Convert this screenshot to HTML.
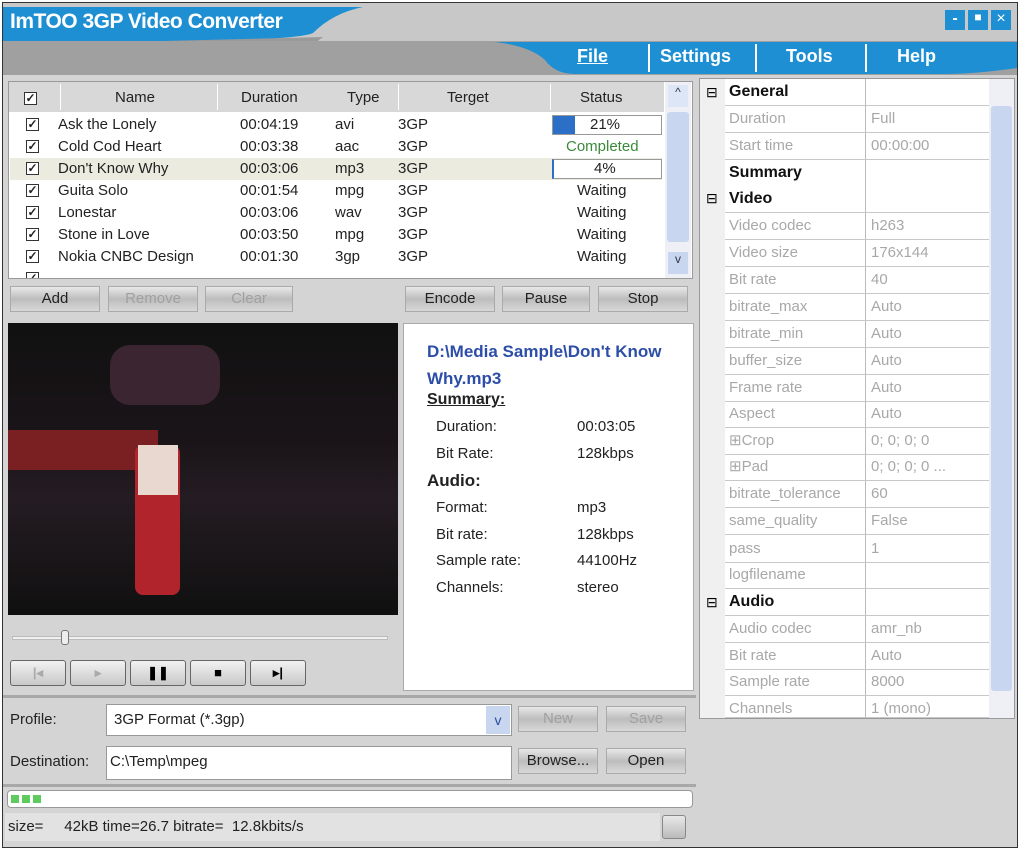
<!DOCTYPE html><html><head><style>
*{margin:0;padding:0;box-sizing:border-box}
body{width:1020px;height:850px;background:#fff;font-family:"Liberation Sans",sans-serif;position:relative;overflow:hidden}
.a{position:absolute}
.win{left:2px;top:2px;width:1016px;height:846px;background:#d4d4d4;border:1px solid #333}
.t{font-size:15px;color:#222;white-space:nowrap}
.btn{position:absolute;height:26px;background:linear-gradient(#e8e8e8,#bdbdbd 50%,#d8d8d8);border:1px solid #aaa;font-size:15px;text-align:center;line-height:24px;color:#222}
.dis{color:#a0a0a0}
.row{position:absolute;left:10px;width:652px;height:22px;font-size:15px;line-height:22px;color:#222}
.row span{position:absolute}
.cb{position:absolute;left:16px;top:4px;width:13px;height:13px;border:1px solid #333;font-size:12px;line-height:11px;text-align:center;font-weight:bold;background:#fff}
.pr{position:absolute;left:725px;width:264px;height:27px;border-bottom:1px solid #c8c8c8;font-size:15px;line-height:26px;color:#a8a8a8}
.pr span{position:absolute;left:4px}.pr i{position:absolute;left:146px;font-style:normal}
.hd{color:#111;font-weight:bold;font-size:16px}
.tb{position:absolute;top:660px;width:56px;height:26px;border:1px solid #666;border-radius:3px;background:linear-gradient(#f2f2f2,#c8c8c8);font-size:13px;text-align:center;line-height:24px;font-weight:bold}
</style></head><body>
<div class="a win"></div>
<!-- title -->
<div class="a" style="left:3px;top:3px;width:1014px;height:38px;background:#c8c8c8"></div>
<svg class="a" style="left:3px;top:3px" width="600" height="80"><path d="M0 4 H360 Q330 10 310 30 Q290 40 0 42Z" fill="#1e8fd2"/><path d="M0 42 L320 34 Q300 50 270 60 L0 62Z" fill="#9a9a9a"/></svg>
<div class="a" style="left:10px;top:10px;font-size:21px;font-weight:bold;color:#fff;letter-spacing:-0.5px">ImTOO 3GP Video Converter</div>
<div class="a" style="left:945px;top:10px;width:70px;height:22px;display:flex;gap:3px"><div style="width:20px;height:20px;background:#1e8fd2;color:#fff;text-align:center;font-weight:bold">-</div><div style="width:20px;height:20px;background:#1e8fd2;color:#fff;text-align:center;font-size:12px">■</div><div style="width:20px;height:20px;background:#1e8fd2;color:#fff;text-align:center">×</div></div>
<div class="a" style="left:3px;top:41px;width:1014px;height:34px;background:#a0a0a0"></div>
<svg class="a" style="left:495px;top:40px" width="522" height="36"><path d="M0 2 H522 V28 Q480 34 450 34 H80 Q60 34 50 20 Q35 6 0 2Z" fill="#1e8fd2"/></svg>
<div class="a" style="left:577px;top:46px;font-size:18px;font-weight:bold;color:#fff;text-decoration:underline">File</div>
<div class="a" style="left:660px;top:46px;font-size:18px;font-weight:bold;color:#fff">Settings</div>
<div class="a" style="left:786px;top:46px;font-size:18px;font-weight:bold;color:#fff">Tools</div>
<div class="a" style="left:897px;top:46px;font-size:18px;font-weight:bold;color:#fff">Help</div>
<div class="a" style="left:648px;top:44px;width:2px;height:28px;background:#fff"></div>
<div class="a" style="left:755px;top:44px;width:2px;height:28px;background:#fff"></div>
<div class="a" style="left:865px;top:44px;width:2px;height:28px;background:#fff"></div>
<!-- list -->
<div class="a" style="left:8px;top:81px;width:685px;height:198px;background:#fff;border:1px solid #999"></div>
<div class="a" style="left:9px;top:82px;width:655px;height:30px;background:#d8d8d8"></div>
<div class="a t" style="left:24px;top:89px"><div class="cb" style="position:relative;left:0;top:0;display:inline-block">✓</div></div>
<div class="a t" style="left:115px;top:89px">Name</div><div class="a t" style="left:241px;top:89px">Duration</div><div class="a t" style="left:347px;top:89px">Type</div><div class="a t" style="left:447px;top:89px">Terget</div><div class="a t" style="left:580px;top:89px">Status</div>
<div class="a" style="left:60px;top:84px;width:1px;height:26px;background:#fff"></div><div class="a" style="left:217px;top:84px;width:1px;height:26px;background:#fff"></div><div class="a" style="left:398px;top:84px;width:1px;height:26px;background:#fff"></div><div class="a" style="left:550px;top:84px;width:1px;height:26px;background:#fff"></div>
<div class="a" style="left:665px;top:82px;width:26px;height:196px;background:#eef0f6"></div>
<div class="a" style="left:667px;top:112px;width:22px;height:130px;background:#c8d6f0;border-radius:3px"></div>
<div class="a" style="left:668px;top:85px;width:20px;height:22px;background:#dde6f6;color:#334;text-align:center;font-size:12px">^</div>
<div class="a" style="left:668px;top:252px;width:20px;height:22px;background:#c8d6f0;color:#334;text-align:center;font-size:12px">v</div>
<div class="row" style="top:114px"><div class="cb">✓</div><span style="left:48px">Ask the Lonely</span><span style="left:230px">00:04:19</span><span style="left:325px">avi</span><span style="left:388px">3GP</span></div>
<div class="a" style="left:552px;top:115px;width:110px;height:20px;border:1px solid #999"><div style="width:22px;height:18px;background:#2b6fc7"></div></div><div class="a t" style="left:590px;top:116px">21%</div>
<div class="row" style="top:136px"><div class="cb">✓</div><span style="left:48px">Cold Cod Heart</span><span style="left:230px">00:03:38</span><span style="left:325px">aac</span><span style="left:388px">3GP</span><span style="left:556px;color:#3a8a3a">Completed</span></div>
<div class="row" style="top:158px;background:#ecebe0"><div class="cb">✓</div><span style="left:48px">Don't Know Why</span><span style="left:230px">00:03:06</span><span style="left:325px">mp3</span><span style="left:388px">3GP</span></div>
<div class="a" style="left:552px;top:159px;width:110px;height:20px;border:1px solid #999;border-left:2px solid #2b6fc7;background:#fff"></div><div class="a t" style="left:594px;top:160px">4%</div>
<div class="row" style="top:180px"><div class="cb">✓</div><span style="left:48px">Guita Solo</span><span style="left:230px">00:01:54</span><span style="left:325px">mpg</span><span style="left:388px">3GP</span><span style="left:567px">Waiting</span></div>
<div class="row" style="top:202px"><div class="cb">✓</div><span style="left:48px">Lonestar</span><span style="left:230px">00:03:06</span><span style="left:325px">wav</span><span style="left:388px">3GP</span><span style="left:567px">Waiting</span></div>
<div class="row" style="top:224px"><div class="cb">✓</div><span style="left:48px">Stone in Love</span><span style="left:230px">00:03:50</span><span style="left:325px">mpg</span><span style="left:388px">3GP</span><span style="left:567px">Waiting</span></div>
<div class="row" style="top:246px"><div class="cb">✓</div><span style="left:48px">Nokia CNBC Design</span><span style="left:230px">00:01:30</span><span style="left:325px">3gp</span><span style="left:388px">3GP</span><span style="left:567px">Waiting</span></div>
<div class="row" style="top:268px;height:10px;overflow:hidden"><div class="cb">✓</div></div>
<!-- buttons -->
<div class="btn" style="left:10px;top:286px;width:90px">Add</div>
<div class="btn dis" style="left:108px;top:286px;width:90px">Remove</div>
<div class="btn dis" style="left:205px;top:286px;width:88px">Clear</div>
<div class="btn" style="left:405px;top:286px;width:90px">Encode</div>
<div class="btn" style="left:502px;top:286px;width:88px">Pause</div>
<div class="btn" style="left:598px;top:286px;width:90px">Stop</div>
<!-- video -->
<div class="a" style="left:8px;top:323px;width:390px;height:292px;background:linear-gradient(180deg,#111 0%,#1a1418 40%,#241c22 60%,#101010 100%)"></div>
<div class="a" style="left:8px;top:430px;width:150px;height:40px;background:#7a1f22"></div>
<div class="a" style="left:110px;top:345px;width:110px;height:60px;background:#3a2530;border-radius:20px"></div>
<div class="a" style="left:135px;top:445px;width:45px;height:150px;background:#b2242c;border-radius:8px"></div>
<div class="a" style="left:138px;top:445px;width:40px;height:50px;background:#e8d8d0"></div>
<div class="a" style="left:12px;top:636px;width:376px;height:4px;background:#f0f0f0;border:1px solid #bbb"></div>
<div class="a" style="left:61px;top:630px;width:8px;height:15px;background:#eee;border:1px solid #777;border-radius:3px"></div>
<div class="tb" style="left:10px;color:#aaa">|◂</div><div class="tb" style="left:70px;color:#aaa">▸</div><div class="tb" style="left:130px">❚❚</div><div class="tb" style="left:190px">■</div><div class="tb" style="left:250px">▸|</div>
<!-- info -->
<div class="a" style="left:403px;top:323px;width:291px;height:368px;background:#fff;border:1px solid #aaa"></div>
<div class="a" style="left:427px;top:338px;font-size:17px;font-weight:bold;color:#2c4ea8;line-height:27px;width:270px">D:\Media Sample\Don't Know<br>Why.mp3</div>
<div class="a" style="left:427px;top:391px;font-size:16px;font-weight:bold;text-decoration:underline;color:#222">Summary:</div>
<div class="a t" style="left:436px;top:418px">Duration:</div><div class="a t" style="left:577px;top:418px">00:03:05</div>
<div class="a t" style="left:436px;top:445px">Bit Rate:</div><div class="a t" style="left:577px;top:445px">128kbps</div>
<div class="a" style="left:427px;top:471px;font-size:17px;font-weight:bold;color:#222">Audio:</div>
<div class="a t" style="left:436px;top:499px">Format:</div><div class="a t" style="left:577px;top:499px">mp3</div>
<div class="a t" style="left:436px;top:526px">Bit rate:</div><div class="a t" style="left:577px;top:526px">128kbps</div>
<div class="a t" style="left:436px;top:552px">Sample rate:</div><div class="a t" style="left:577px;top:552px">44100Hz</div>
<div class="a t" style="left:436px;top:579px">Channels:</div><div class="a t" style="left:577px;top:579px">stereo</div>
<!-- profile -->
<div class="a" style="left:3px;top:695px;width:693px;height:3px;background:#a8a8a8"></div>
<div class="a t" style="left:10px;top:711px">Profile:</div>
<div class="a" style="left:106px;top:704px;width:406px;height:32px;background:#fff;border:1px solid #999"></div>
<div class="a t" style="left:114px;top:711px">3GP Format  (*.3gp)</div>
<div class="a" style="left:486px;top:706px;width:24px;height:28px;background:#c8d6f0;color:#2b4e9a;text-align:center;line-height:28px;font-size:14px">v</div>
<div class="btn dis" style="left:518px;top:706px;width:80px">New</div><div class="btn dis" style="left:606px;top:706px;width:80px">Save</div>
<div class="a t" style="left:10px;top:753px">Destination:</div>
<div class="a" style="left:106px;top:746px;width:406px;height:34px;background:#fff;border:1px solid #999"></div>
<div class="a t" style="left:110px;top:753px">C:\Temp\mpeg</div>
<div class="btn" style="left:518px;top:748px;width:80px">Browse...</div><div class="btn" style="left:606px;top:748px;width:80px">Open</div>
<div class="a" style="left:3px;top:784px;width:693px;height:3px;background:#a8a8a8"></div>
<div class="a" style="left:7px;top:790px;width:686px;height:18px;background:#fff;border:1px solid #999;border-radius:4px"></div>
<div class="a" style="left:11px;top:795px;width:8px;height:8px;background:#5dcb5d"></div><div class="a" style="left:22px;top:795px;width:8px;height:8px;background:#5dcb5d"></div><div class="a" style="left:33px;top:795px;width:8px;height:8px;background:#5dcb5d"></div>
<div class="a" style="left:5px;top:813px;width:655px;height:28px;background:#e2e2e2"></div>
<div class="a t" style="left:8px;top:818px">size=&nbsp;&nbsp;&nbsp;&nbsp; 42kB time=26.7 bitrate=&nbsp; 12.8kbits/s</div>
<div class="a" style="left:662px;top:815px;width:24px;height:24px;background:linear-gradient(#e8e8e8,#bbb);border:1px solid #888;border-radius:3px"></div>
<!-- properties -->
<div class="a" style="left:699px;top:78px;width:316px;height:641px;background:#fff;border:1px solid #999"></div>
<div class="a" style="left:700px;top:79px;width:25px;height:639px;background:#f0f0f0"></div>
<div class="a" style="left:865px;top:79px;width:1px;height:639px;background:#bbb"></div>
<div class="a" style="left:989px;top:79px;width:25px;height:639px;background:#eef0f6"></div>
<div class="a" style="left:991px;top:106px;width:21px;height:585px;background:#c8d6f0;border-radius:3px"></div>
<div class="pr" style="top:79px"><span class="hd">General</span></div>
<div class="pr" style="top:106px"><span>Duration</span><i>Full</i></div>
<div class="pr" style="top:133px"><span>Start time</span><i>00:00:00</i></div>
<div class="pr" style="top:160px;height:53px"><span class="hd" style="line-height:26px">Summary<br>Video</span></div>
<div class="pr" style="top:213px"><span>Video codec</span><i>h263</i></div>
<div class="pr" style="top:240px"><span>Video size</span><i>176x144</i></div>
<div class="pr" style="top:267px"><span>Bit rate</span><i>40</i></div>
<div class="pr" style="top:294px"><span>bitrate_max</span><i>Auto</i></div>
<div class="pr" style="top:321px"><span>bitrate_min</span><i>Auto</i></div>
<div class="pr" style="top:348px"><span>buffer_size</span><i>Auto</i></div>
<div class="pr" style="top:375px"><span>Frame rate</span><i>Auto</i></div>
<div class="pr" style="top:401px"><span>Aspect</span><i>Auto</i></div>
<div class="pr" style="top:428px"><span>⊞Crop</span><i>0; 0; 0; 0</i></div>
<div class="pr" style="top:454px"><span>⊞Pad</span><i>0; 0; 0; 0 ...</i></div>
<div class="pr" style="top:481px"><span>bitrate_tolerance</span><i>60</i></div>
<div class="pr" style="top:508px"><span>same_quality</span><i>False</i></div>
<div class="pr" style="top:536px"><span>pass</span><i>1</i></div>
<div class="pr" style="top:562px"><span>logfilename</span></div>
<div class="pr" style="top:589px"><span class="hd">Audio</span></div>
<div class="pr" style="top:616px"><span>Audio codec</span><i>amr_nb</i></div>
<div class="pr" style="top:643px"><span>Bit rate</span><i>Auto</i></div>
<div class="pr" style="top:669px"><span>Sample rate</span><i>8000</i></div>
<div class="pr" style="top:696px;height:22px;overflow:hidden"><span>Channels</span><i>1 (mono)</i></div>
<div class="a" style="left:706px;top:84px;font-size:14px">⊟</div><div class="a" style="left:706px;top:190px;font-size:14px">⊟</div><div class="a" style="left:706px;top:594px;font-size:14px">⊟</div>
</body></html>
